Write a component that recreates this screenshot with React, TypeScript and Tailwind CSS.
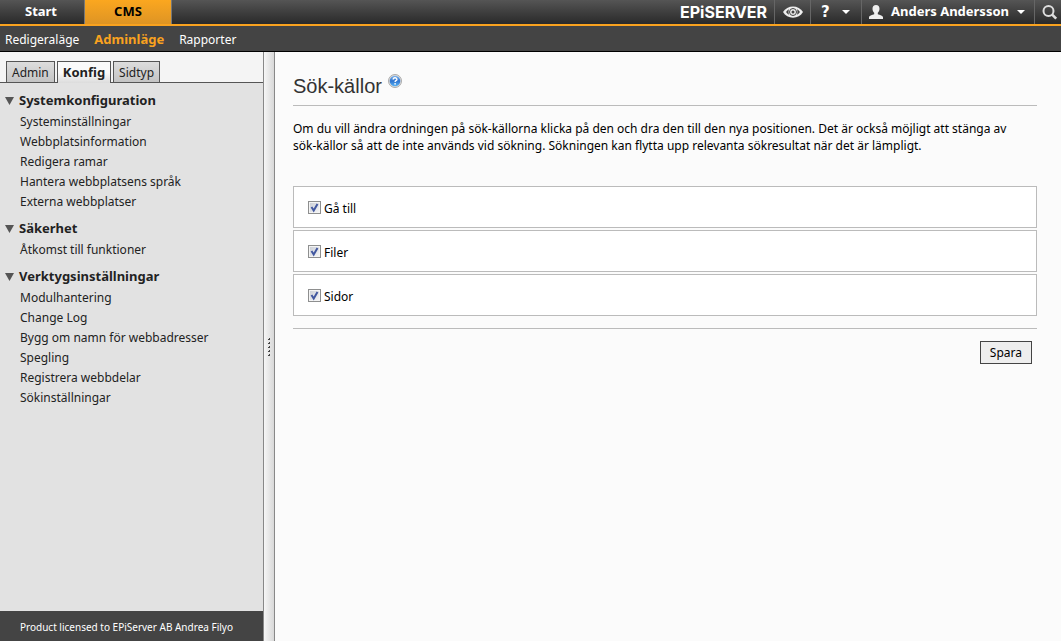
import { ReactNode } from 'react';

interface MenuSection {
  title: string;
  items: string[];
}

const SECTIONS: MenuSection[] = [
  {
    title: "Systemkonfiguration",
    items: [
      "Systeminställningar",
      "Webbplatsinformation",
      "Redigera ramar",
      "Hantera webbplatsens språk",
      "Externa webbplatser",
    ],
  },
  {
    title: "Säkerhet",
    items: ["Åtkomst till funktioner"],
  },
  {
    title: "Verktygsinställningar",
    items: [
      "Modulhantering",
      "Change Log",
      "Bygg om namn för webbadresser",
      "Spegling",
      "Registrera webbdelar",
      "Sökinställningar",
    ],
  },
];

const SOURCES = ["Gå till", "Filer", "Sidor"];

function Caret() {
  return (
    <svg width="8" height="4" viewBox="0 0 8 4" fill="currentColor" aria-hidden="true">
      <path d="M0 0h8L4 4z" />
    </svg>
  );
}

function BarButton({ label, className, children }: { label: string; className: string; children: ReactNode }) {
  return (
    <button type="button" aria-label={label} className={`flex h-full items-center border-l border-[#666] ${className}`}>
      {children}
    </button>
  );
}

function TopBar() {
  return (
    <header className="flex h-[26px] justify-between border-b-2 border-[#f9a21f] bg-gradient-to-b from-[#555] to-[#2a2a2a] text-white">
      <nav className="flex text-[13px] font-bold">
        <a href="#start" className="flex w-[84px] items-center justify-center pr-[2px]">Start</a>
        <a
          href="#cms"
          className="flex w-[88px] items-center justify-center border-x border-[#777] bg-gradient-to-b from-[#fba71f] to-[#de9424] text-black"
        >
          CMS
        </a>
      </nav>

      <div className="flex items-center">
        <span className="mr-[7px] font-['Inter',sans-serif] text-[16px] font-bold leading-6">EPiSERVER</span>
        <BarButton label="Visa" className="w-9 justify-center">
          <svg width="20" height="12" viewBox="0 0 20 12" aria-hidden="true">
            <path d="M0 6C4-1.500 16-1.500 20 6 16 13.500 4 13.500 0 6z" fill="#eee" />
            <path d="M3 6c1-1.300 2-2.200 3-2.700-.6 1.700-.6 3.700 0 5.400C5 8.200 4 7.300 3 6zM17 6c-1-1.300-2-2.200-3-2.700.6 1.700.6 3.700 0 5.400 1-.5 2-1.400 3-2.700z" fill="#444" />
            <circle cx="10" cy="6" r="3.500" fill="none" stroke="#444" />
            <circle cx="10" cy="6" r="1.500" fill="#444" />
          </svg>
        </BarButton>
        <BarButton label="Hjälp" className="w-[51px] gap-3 pl-[10px] font-['DejaVu_Sans',sans-serif] text-[15px] font-bold">
          <span>?</span>
          <Caret />
        </BarButton>
        <BarButton label="Anders Andersson" className="w-[173px] gap-2 pl-[7px] text-[13px] font-bold">
          <svg width="14" height="14" viewBox="0 0 14 14" fill="#eee" aria-hidden="true">
            <path d="M7 0c2.300 0 3.500 1.500 3.500 3.800 0 1.700-.7 3.100-1.700 4v1.400c1.800.8 5.200 1.200 5.200 3V14H0v-1.800c0-1.800 3.400-2.200 5.200-3V7.800c-1-.9-1.700-2.300-1.700-4C3.500 1.500 4.700 0 7 0z" />
          </svg>
          <span>Anders Andersson</span>
          <Caret />
        </BarButton>
        <BarButton label="Sök" className="w-[27px] pl-[7px]">
          <svg width="16" height="15" viewBox="0 0 16 15" fill="none" stroke="#ddd" aria-hidden="true">
            <circle cx="6.500" cy="6" r="5" strokeWidth="2" />
            <path d="M10.200 9.700l4 4" strokeWidth="2.600" />
          </svg>
        </BarButton>
      </div>
    </header>
  );
}

function SubBar() {
  return (
    <nav className="flex h-[26px] items-center gap-[15px] border-b border-black bg-[#444] px-[5px] pt-[2px] text-white">
      <a href="#edit">Redigeraläge</a>
      <a href="#admin" className="text-[13px] font-bold text-[#f9a21f]">Adminläge</a>
      <a href="#reports">Rapporter</a>
    </nav>
  );
}

function Tabs() {
  const tab = "h-[21px] border border-b-0 border-[#555] px-[5px] leading-[21px]";
  return (
    <div className="flex h-[31px] items-end gap-[2px] border-b border-[#555] bg-[#f4f4f4] px-[6px]" role="tablist">
      <button type="button" role="tab" className={`${tab} bg-gradient-to-b from-[#ddd] to-[#c4c4c4]`}>Admin</button>
      <button
        type="button"
        role="tab"
        aria-selected="true"
        className={`${tab} -mb-px h-[22px] bg-gradient-to-b from-[#fafafa] from-50% to-[#dcdcdc] text-[13px] font-bold`}
      >
        Konfig
      </button>
      <button type="button" role="tab" className={`${tab} bg-gradient-to-b from-[#ddd] to-[#c4c4c4]`}>Sidtyp</button>
    </div>
  );
}

function Sidebar() {
  return (
    <aside className="flex w-[263px] shrink-0 flex-col bg-[#e2e2e2] text-[#222]">
      <Tabs />
      <nav className="flex grow flex-col gap-[6px] pt-[7px]">
        {SECTIONS.map((section) => (
          <section key={section.title}>
            <h2 className="flex h-[22px] items-center gap-[5px] pl-[5px] text-[13px] font-bold">
              <svg width="9" height="8" viewBox="0 0 9 8" fill="#555" aria-hidden="true">
                <path d="M0 0h9L4.500 8z" />
              </svg>
              {section.title}
            </h2>
            <ul className="pl-5">
              {section.items.map((item) => (
                <li key={item} className="h-5 leading-5">
                  <a href="#item">{item}</a>
                </li>
              ))}
            </ul>
          </section>
        ))}
      </nav>
      <footer className="h-[30px] bg-[#444] pl-5 pt-px text-[10px] leading-[30px] text-white">
        Product licensed to EPiServer AB Andrea Filyo
      </footer>
    </aside>
  );
}

function Splitter() {
  return (
    <div className="flex w-3 shrink-0 items-center justify-center border-x border-[#888] bg-gradient-to-r from-[#f6f6f6] to-[#d8d8d8]">
      <svg width="2" height="18" viewBox="0 0 2 18" fill="#444" aria-hidden="true">
        <path d="M1 0h1v1H1zM0 1h2v1H0zM1 4h1v1H1zM0 5h2v1H0zM1 8h1v1H1zM0 9h2v1H0zM1 12h1v1H1zM0 13h2v1H0zM1 16h1v1H1zM0 17h2v1H0z" />
      </svg>
    </div>
  );
}

function HelpIcon() {
  return (
    <svg width="14" height="14" viewBox="0 0 14 14" aria-hidden="true">
      <defs>
        <linearGradient id="help" x1="0" y1="0" x2="0" y2="1">
          <stop offset="0" stopColor="#7db4ee" />
          <stop offset="0.500" stopColor="#2f74cf" />
          <stop offset="1" stopColor="#5ab4f5" />
        </linearGradient>
      </defs>
      <circle cx="7" cy="7" r="6.500" fill="#ddd" stroke="#aaa" />
      <circle cx="7" cy="7" r="5.300" fill="url(#help)" />
      <path d="M5.200 5.600c0-2.400 3.700-2.300 3.700-.2 0 1.300-1.800 1.200-1.800 2.500" fill="none" stroke="#fff" strokeWidth="1.400" />
      <circle cx="7.100" cy="9.800" r="0.900" fill="#fff" />
    </svg>
  );
}

function SourceRow({ name }: { name: string }) {
  return (
    <li className="border border-[#bbb] bg-white">
      <label className="flex h-10 items-center gap-[3px] px-[14px] pt-1">
        <span className="relative -mt-1 flex">
          <input
            type="checkbox"
            defaultChecked
            className="peer size-[13px] appearance-none border border-[#8e8f8f] bg-gradient-to-br from-[#c8ccd4] to-[#f8f8f8] shadow-[inset_0_0_0_1px_#f4f4f4]"
          />
          <svg
            className="pointer-events-none absolute inset-0 hidden peer-checked:block"
            width="13"
            height="13"
            viewBox="0 0 13 13"
            fill="none"
            aria-hidden="true"
          >
            <path d="M3.500 6l2.200 3.500L9.500 3" stroke="#4258a0" strokeWidth="2" />
          </svg>
        </span>
        {name}
      </label>
    </li>
  );
}

function Content() {
  return (
    <main className="min-w-0 grow bg-[#fbfbfb] pl-[18px] pr-6 text-black">
      <div className="flex h-[54px] gap-[6px] border-b border-[#bbb] pt-[22px]">
        <h1 className="font-['Liberation_Sans',Arial,sans-serif] text-[20px] leading-6 text-[#333]">Sök-källor</h1>
        <button type="button" aria-label="Hjälp" className="size-[14px]">
          <HelpIcon />
        </button>
      </div>
      <p className="pt-[14px] leading-[17px]">
        Om du vill ändra ordningen på sök-källorna klicka på den och dra den till den nya positionen. Det är också
        möjligt att stänga av <span className="whitespace-nowrap">sök-källor</span> så att de inte används vid sökning.
        Sökningen kan flytta upp relevanta sökresultat när det är lämpligt.
      </p>
      <ul className="mt-8 flex flex-col gap-[2px]">
        {SOURCES.map((name) => (
          <SourceRow key={name} name={name} />
        ))}
      </ul>
      <div className="mt-3 flex justify-end border-t border-[#bbb] pr-[5px] pt-3">
        <button type="button" className="h-[23px] border border-[#444] bg-[#eee] px-[9px]">
          Spara
        </button>
      </div>
    </main>
  );
}

export default function App() {
  return (
    <div className="flex min-h-screen flex-col font-['Noto_Sans','Open_Sans',sans-serif] text-[12px]">
      <TopBar />
      <SubBar />
      <div className="flex grow">
        <Sidebar />
        <Splitter />
        <Content />
      </div>
    </div>
  );
}
